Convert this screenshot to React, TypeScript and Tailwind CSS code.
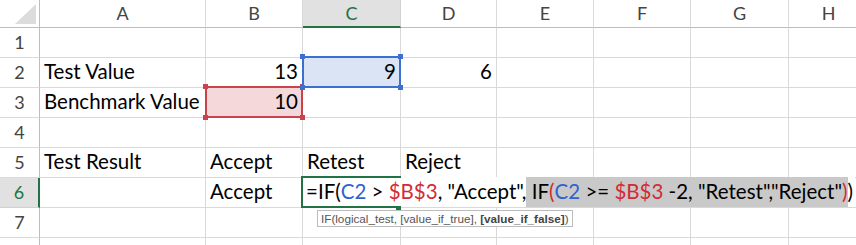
import React from "react";

const cols = ["A", "B", "C", "D", "E", "F", "G", "H"];

type CellData = { v: string; right?: boolean };

const data: Record<string, CellData> = {
  A2: { v: "Test Value" },
  B2: { v: "13", right: true },
  C2: { v: "9", right: true },
  D2: { v: "6", right: true },
  A3: { v: "Benchmark Value" },
  B3: { v: "10", right: true },
  A5: { v: "Test Result" },
  B5: { v: "Accept" },
  C5: { v: "Retest" },
  D5: { v: "Reject" },
  B6: { v: "Accept" },
};

const cellFont = "font-['Lato','Liberation_Sans',sans-serif] text-[20.5px] leading-none text-black";
const headFont = "font-['Lato','Liberation_Sans',sans-serif] text-[18px]";

function ColHeader({ letter }: { letter: string }) {
  if (letter === "C") {
    return (
      <div className={`flex items-center justify-center bg-[#e1e1e1] border-r border-[#d0d0d0] border-b-2 border-b-[#217346] text-[#217346] ${headFont}`}>
        {letter}
      </div>
    );
  }
  return (
    <div className={`flex items-center justify-center border-r border-b border-r-[#dadada] border-b-[#bdbdbd] text-[#444] ${headFont}`}>
      {letter}
    </div>
  );
}

function RowHeader({ n }: { n: number }) {
  if (n === 6) {
    return (
      <div className={`flex items-center justify-center bg-[#e1e1e1] border-b border-b-[#d0d0d0] border-r-2 border-r-[#217346] text-[#217346] ${headFont}`}>
        {n}
      </div>
    );
  }
  return (
    <div className={`flex items-center justify-center border-r border-b border-r-[#bdbdbd] border-b-[#dadada] text-[#444] ${headFont}`}>
      {n < 8 ? n : ""}
    </div>
  );
}

function Cell({ id }: { id: string }) {
  const c = data[id];
  return (
    <div
      className={`flex items-end pb-[6px] border-r border-b border-[#d9d9d9] whitespace-nowrap overflow-visible ${cellFont} ${
        c?.right ? "justify-end pr-[4px]" : "pl-[4px]"
      }`}
    >
      {c?.v}
    </div>
  );
}

function Handle({ className }: { className: string }) {
  return <span className={`absolute w-[5px] h-[5px] ${className}`} />;
}

export default function App() {
  const rows = [1, 2, 3, 4, 5, 6, 7, 8];
  return (
    <div className="w-[856px] h-[245px] overflow-hidden bg-white">
      <div className="relative">
        <div className="grid grid-cols-[40px_166px_97px_98px_96px_97px_97px_98px_80px] grid-rows-[28px_repeat(8,30px)]">
          {/* corner */}
          <div className="relative border-r border-b border-r-[#bdbdbd] border-b-[#bdbdbd]">
            <svg className="absolute left-[15px] top-[4px]" width="21" height="20" viewBox="0 0 21 20">
              <polygon points="21,0 21,20 0,20" fill="#dcdcdc" />
            </svg>
          </div>
          {cols.map((c) => (
            <ColHeader key={c} letter={c} />
          ))}
          {rows.map((r) => (
            <React.Fragment key={r}>
              <RowHeader n={r} />
              {cols.map((c) => (
                <Cell key={c + r} id={c + r} />
              ))}
            </React.Fragment>
          ))}
        </div>

        {/* B3 reference highlight (red) */}
        <div className="absolute left-[205px] top-[86px] w-[98px] h-[32px] border-2 border-[#c8434b] bg-[#f5d8da] flex items-end justify-end pb-[5px] pr-[3px]">
          <span className={cellFont}>10</span>
          <Handle className="left-[-4px] top-[-4px] bg-[#c8434b]" />
          <Handle className="right-[-4px] top-[-4px] bg-[#c8434b]" />
          <Handle className="left-[-4px] bottom-[-4px] bg-[#c8434b]" />
          <Handle className="right-[-4px] bottom-[-4px] bg-[#c8434b]" />
        </div>

        {/* C2 reference highlight (blue) */}
        <div className="absolute left-[302px] top-[56px] w-[99px] h-[32px] border-2 border-[#3c6fcf] bg-[#dbe4f4] flex items-end justify-end pb-[5px] pr-[3px]">
          <span className={cellFont}>9</span>
          <Handle className="left-[-4px] top-[-4px] bg-[#3c6fcf]" />
          <Handle className="right-[-4px] top-[-4px] bg-[#3c6fcf]" />
          <Handle className="left-[-4px] bottom-[-4px] bg-[#3c6fcf]" />
          <Handle className="right-[-4px] bottom-[-4px] bg-[#3c6fcf]" />
        </div>

        {/* C6 editing text */}
        <div className={`absolute left-[303px] top-[177px] h-[30px] flex items-end pb-[6px] pl-[3px] pr-[2px] bg-white whitespace-nowrap ${cellFont}`}>
          <span>=IF(</span>
          <span className="text-[#2f63d0]">C2</span>
          <span>&nbsp;&gt;&nbsp;</span>
          <span className="text-[#d42a33]">$B$3</span>
          <span>, "Accept",</span>
          <span className="bg-[#c9c9c9] self-stretch flex items-end -mb-[6px] pb-[6px]">
            <span>&nbsp;IF</span>
            <span className="text-[#d42a33]">(</span>
            <span className="text-[#2f63d0]">C2</span>
            <span>&nbsp;&gt;=&nbsp;</span>
            <span className="text-[#d42a33]">$B$3</span>
            <span>&nbsp;-2, "Retest","Reject"</span>
            <span className="text-[#d42a33]">)</span>
          </span>
          <span>)</span>
        </div>

        {/* C6 active border */}
        <div className="absolute left-[301px] top-[176px] w-[100px] h-[32px] border-2 border-[#217346] border-r-0" />
        <span className="absolute left-[396px] top-[206px] w-[5px] h-[4px] bg-[#217346]" />

        {/* tooltip */}
        <div className="absolute left-[317px] top-[210px] h-[17px] px-[3px] flex items-center bg-white border border-[#bcbcbc] text-[11.7px] text-[#555] font-['Liberation_Sans',sans-serif] whitespace-nowrap">
          IF(logical_test, [value_if_true],&nbsp;<b className="font-bold text-[#444]">[value_if_false]</b>)
        </div>
      </div>
    </div>
  );
}
